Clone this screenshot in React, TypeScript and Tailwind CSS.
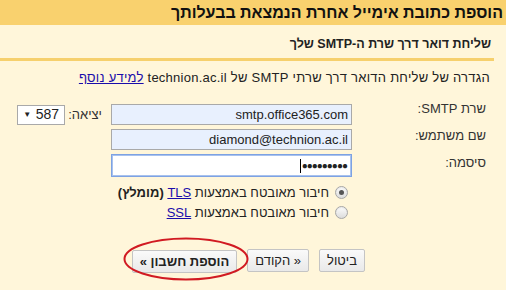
import React from 'react';

const font = { fontFamily: '"Liberation Sans", Arial, sans-serif' };

const Radio = ({ checked }: { checked?: boolean }) => (
	<span className="flex h-[13px] w-[13px] items-center justify-center rounded-full border border-[#a6a6a6] bg-gradient-to-b from-[#fdfdfd] to-[#dcdcdc] shadow-[inset_0_1px_1px_rgba(0,0,0,0.08)]">
		{checked && <span className="h-[5px] w-[5px] rounded-full bg-[#555]" />}
	</span>
);

const Btn = ({ title, bold }: { title: string; bold?: boolean }) => (
	<button className={`h-[23px] rounded-[2px] border border-[#c4c4c4] bg-gradient-to-b from-[#fafafa] to-[#e9e9e9] px-[7px] text-[13px] leading-[21px] text-[#222] ${bold ? 'font-bold' : ''}`}>
		{title}
	</button>
);

const App = () => {
	return (
		<div dir="rtl" className="flex h-[290px] w-[506px] flex-col bg-[#fff6da] text-[#222]" style={font}>
			<div className="h-[25px] shrink-0 bg-[#f9d16e] pr-[3px] text-[16px] font-bold leading-[25px] text-[#111]">
				הוספת כתובת אימייל אחרת הנמצאת בבעלותך
			</div>

			<div className="pr-[12px]">
				<div className="border-b-[3px] border-[#f6d06d] pb-[6px] pr-[3px] pt-[11px] text-[12.5px] font-bold leading-[16px]">
					שליחת דואר דרך שרת ה-SMTP שלך
				</div>
			</div>

			<div className="pr-[16px] pt-[9px] text-[13px] leading-[16px] tracking-[0.25px]">
				הגדרה של שליחת הדואר דרך שרתי SMTP של technion.ac.il{' '}
				<a className="text-[#1a0dab] underline">למידע נוסף</a>
			</div>

			<div className="flex pr-[20px] pt-[18px] text-[13px]">
				<div className="flex w-[134px] flex-col gap-[4px] text-[#333]">
					<div className="-mt-[2px] h-[23px] leading-[14px]">שרת SMTP:</div>
					<div className="h-[21px] leading-[14px]">שם משתמש:</div>
					<div className="h-[23px] pt-[2px] leading-[14px]">סיסמה:</div>
				</div>
				<div className="flex w-[241px] flex-col gap-[4px]">
					<div className="h-[21px] border border-[#a9a9a9] bg-[#e8f0fe] px-[3px] text-right text-[13px] leading-[19px]" dir="ltr">
						smtp.office365.com
					</div>
					<div className="h-[21px] border border-[#a9a9a9] bg-[#e8f0fe] px-[3px] text-right text-[13px] leading-[19px]" dir="ltr">
						diamond@technion.ac.il
					</div>
					<div className="flex h-[23px] items-center justify-end border border-[#7da2e3] bg-white px-[4px] shadow-[inset_0_0_0_1px_#a8c2ee]" dir="ltr">
						<span className="h-[14px] w-px bg-black" />
						<span className="ml-[1px] text-[10px] leading-none tracking-[-1px]">●●●●●●●●●</span>
					</div>
				</div>
				<div className="mr-[9px] flex h-[21px] items-center gap-[3px]">
					<span className="leading-[14px] text-[#333]">יציאה:</span>
					<div className="flex h-[20px] w-[48px] items-center justify-between border border-[#a9a9a9] bg-white px-[5px] text-[14px]" dir="ltr">
						<span className="text-[8px] leading-none">▼</span>
						<span>587</span>
					</div>
				</div>
			</div>

			<div className="flex flex-col gap-[5px] pr-[158px] pt-[8px] text-[13px] leading-[15px]">
				<div className="flex items-center gap-[6px]">
					<Radio checked />
					<span>
						חיבור מאובטח באמצעות <a className="text-[#1a0dab] underline">TLS</a> <b>(מומלץ)</b>
					</span>
				</div>
				<div className="flex items-center gap-[6px]">
					<Radio />
					<span>
						חיבור מאובטח באמצעות <a className="text-[#1a0dab] underline">SSL</a>
					</span>
				</div>
			</div>

			<div className="flex gap-[10px] pr-[141px] pt-[29px]">
				<Btn title="ביטול" />
				<Btn title="« הקודם" />
				<div className="relative">
					<Btn title="הוספת חשבון »" bold />
					<svg className="absolute -left-[9px] -top-[12px] h-[44px] w-[126px]" viewBox="0 0 126 44" fill="none">
						<ellipse cx="63" cy="22" rx="61.5" ry="20.5" stroke="#d11a22" strokeWidth="2" />
					</svg>
				</div>
			</div>
		</div>
	);
};

export default App;
